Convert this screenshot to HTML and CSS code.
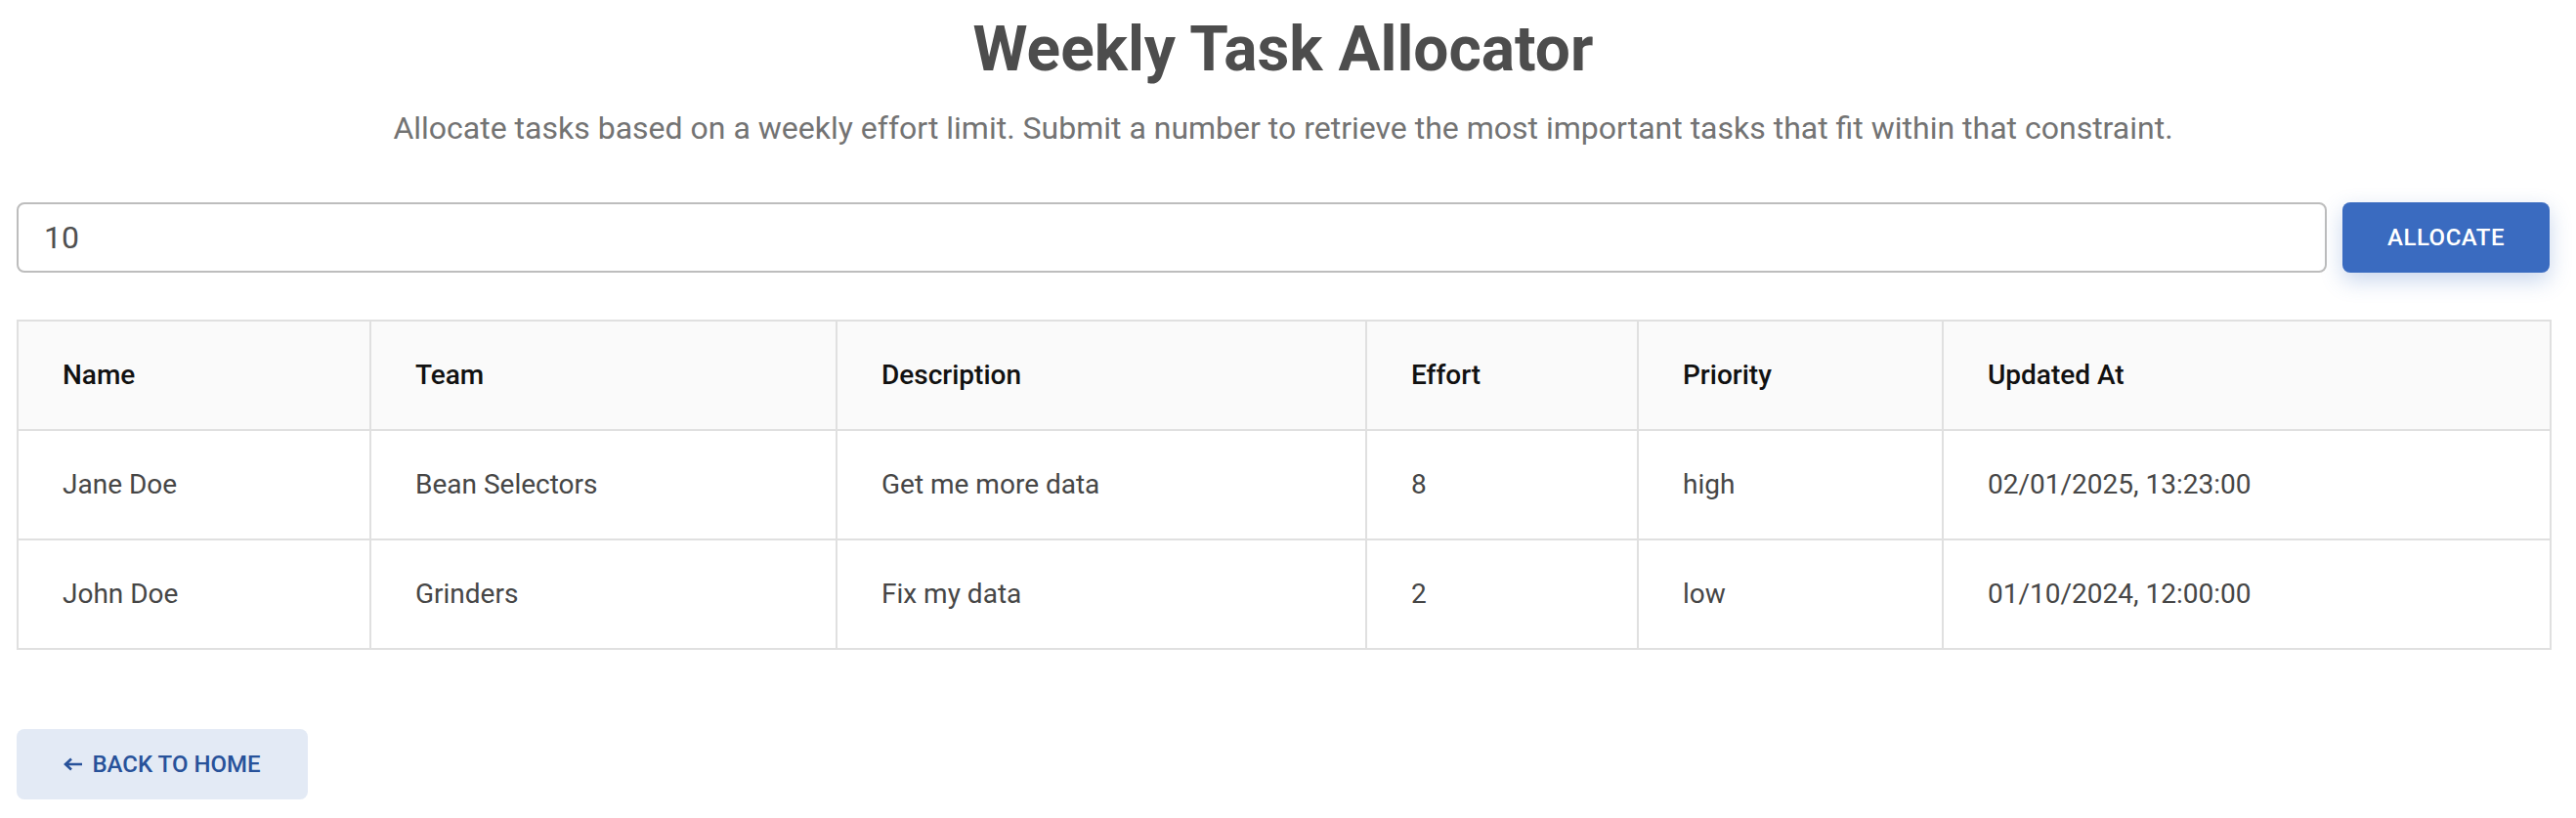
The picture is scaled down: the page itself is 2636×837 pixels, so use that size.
FILE: index.html
```html
<!DOCTYPE html>
<html lang="en">
<head>
<meta charset="utf-8">
<title>Weekly Task Allocator</title>
<link rel="stylesheet" href="styles.css">
</head>
<body>
<main class="page">
  <h1 class="title">Weekly Task Allocator</h1>
  <p class="subtitle">Allocate tasks based on a weekly effort limit. Submit a number to retrieve the most important tasks that fit within that constraint.</p>
  <form class="allocate-form">
    <input class="effort-input" type="text" value="10">
    <button class="allocate-btn" type="button">Allocate</button>
  </form>
  <table class="tasks">
    <colgroup>
      <col class="c-name"><col class="c-team"><col class="c-desc"><col class="c-effort"><col class="c-prio"><col class="c-upd">
    </colgroup>
    <thead>
      <tr><th>Name</th><th>Team</th><th>Description</th><th>Effort</th><th>Priority</th><th>Updated At</th></tr>
    </thead>
    <tbody>
      <tr><td>Jane Doe</td><td>Bean Selectors</td><td>Get me more data</td><td>8</td><td>high</td><td>02/01/2025, 13:23:00</td></tr>
      <tr><td>John Doe</td><td>Grinders</td><td>Fix my data</td><td>2</td><td>low</td><td>01/10/2024, 12:00:00</td></tr>
    </tbody>
  </table>
  <div class="back-row">
    <a class="back-btn" href="#"><svg class="arrow" width="19" height="14" viewBox="0 0 19 14" aria-hidden="true"><path d="M19 7H3M8 1.5L2 7l6 5.5" fill="none" stroke="currentColor" stroke-width="2.6"/></svg><span>Back to Home</span></a>
  </div>
</main>
</body>
</html>
```
FILE: styles.css
```css
html, body {
  margin: 0;
  padding: 0;
  background: #ffffff;
}
body {
  font-family: Roboto, "Noto Sans", "Liberation Sans", sans-serif;
}
.page {
  width: 2592px;
  margin-left: 17px;
  padding-top: 11px;
  display: flex;
  flex-direction: column;
}
.title {
  margin: 0;
  font-size: 64px;
  line-height: 80px;
  font-weight: 700;
  color: #4d4d4d;
  text-align: center;
}
.subtitle {
  margin: 16px 0 0;
  font-size: 32px;
  line-height: 48px;
  color: #737373;
  text-align: center;
}
.allocate-form {
  margin-top: 52px;
  display: flex;
  gap: 16px;
  align-items: center;
}
.effort-input {
  flex: 1;
  box-sizing: border-box;
  height: 72px;
  border: 2px solid #bdbdbd;
  border-radius: 8px;
  padding: 0 26px;
  font-family: Roboto, "Noto Sans", sans-serif;
  font-size: 32px;
  color: #505050;
  outline: none;
}
.allocate-btn {
  box-sizing: border-box;
  width: 212px;
  height: 72px;
  border: none;
  border-radius: 8px;
  background: #3a6bc0;
  color: #ffffff;
  font-family: Roboto, "Noto Sans", sans-serif;
  font-size: 24px;
  font-weight: 500;
  letter-spacing: 0.5px;
  text-transform: uppercase;
  box-shadow: 0 8px 22px rgba(58, 107, 192, 0.28);
}
.tasks {
  margin-top: 48px;
  width: 2592px;
  border-collapse: collapse;
  table-layout: fixed;
  border: 2px solid #e0e0e0;
}
.c-name { width: 361px; }
.c-team { width: 477px; }
.c-desc { width: 542px; }
.c-effort { width: 278px; }
.c-prio { width: 312px; }
.c-upd { width: 622px; }
.tasks th, .tasks td {
  border: 2px solid #e0e0e0;
  padding: 35px 45px;
  font-size: 28px;
  line-height: 40px;
  text-align: left;
  white-space: nowrap;
}
.tasks th {
  background: #fafafa;
  font-weight: 500;
  color: #111111;
}
.tasks td {
  color: #464646;
  font-weight: 400;
}
.back-row {
  margin-top: 81px;
  display: flex;
}
.back-btn {
  box-sizing: border-box;
  height: 72px;
  width: 298px;
  display: flex;
  align-items: center;
  justify-content: center;
  gap: 10px;
  border-radius: 8px;
  background: #e3eaf5;
  color: #28529a;
  font-size: 24px;
  font-weight: 500;
  text-transform: uppercase;
  text-decoration: none;
}
.arrow {
  flex: none;
  display: block;
}
```
